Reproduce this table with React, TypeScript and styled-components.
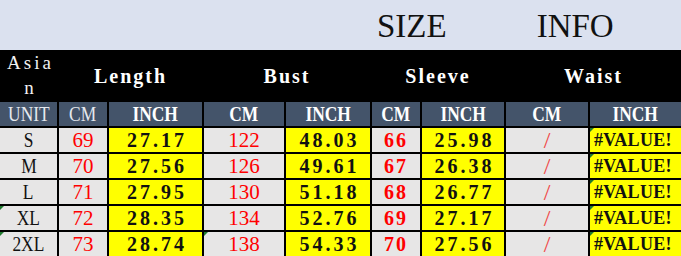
import { createGlobalStyle, styled } from "styled-components"

const GlobalStyle = createGlobalStyle`
	html, body {
		margin: 0;
		padding: 0;
		background: #dbe1ef;
	}
	body {
		width: 681px;
		height: 256px;
		overflow: hidden;
		font-family: "Liberation Serif", serif;
	}
`

const Page = styled.div`
	width: 681px;
	display: flex;
	flex-direction: column;
`

const Title = styled.div`
	height: 50px;
	padding-left: 377px;
	display: flex;
	align-items: center;
	gap: 90px;
	font-family: "Liberation Serif", serif;
	font-size: 33px;
	line-height: 50px;
	padding-top: 1px;
	box-sizing: border-box;
	color: #111;
`

const Table = styled.div`
	display: grid;
	grid-template-columns: 57px 48px 93px 80px 84px 48px 82px 82px 1fr;
	grid-template-rows: 50px 24px;
	grid-auto-rows: 24px;
	gap: 2px;
	background: #000;
`

const Head = styled.div<{ $span?: number }>`
	grid-column: span ${(p) => p.$span ?? 1};
	background: #000;
	color: #fff;
	display: flex;
	align-items: center;
	justify-content: center;
	font-family: "Liberation Serif", serif;
	font-size: 20px;
	font-weight: bold;
	letter-spacing: 2px;
	text-align: center;
	padding-top: 2px;
`

const AsianHead = styled(Head)`
	font-size: 19px;
	font-weight: normal;
	letter-spacing: 3px;
	line-height: 25px;
	padding: 0 2px 0 6px;
	word-break: break-all;
	color: #f2f2f2;
`

const Unit = styled.div<{ $bold?: boolean }>`
	background: #44546a;
	display: flex;
	align-items: center;
	justify-content: center;
	font-family: "Liberation Serif", serif;
	font-size: 20px;
	font-weight: ${(p) => (p.$bold ? "bold" : "normal")};
	color: ${(p) => (p.$bold ? "#fff" : "#e6e9ef")};
	overflow: hidden;
`

const Cell = styled.div<{ $yellow?: boolean; $flag?: boolean; $left?: boolean }>`
	position: relative;
	background: ${(p) => (p.$yellow ? "#ffff00" : "#e7e6e6")};
	display: flex;
	align-items: center;
	justify-content: ${(p) => (p.$left ? "flex-start" : "center")};
	padding-left: ${(p) => (p.$left ? "4px" : "0")};
	overflow: hidden;

	&::before {
		content: "";
		display: ${(p) => (p.$flag ? "block" : "none")};
		position: absolute;
		left: 0;
		top: 0;
		border-top: 4px solid #1f7a2f;
		border-right: 4px solid transparent;
	}
`

const Squeeze = styled.span<{ $sx?: number }>`
	display: inline-block;
	transform: scaleX(${(p) => p.$sx ?? 1});
	white-space: nowrap;
`

const Label = styled(Squeeze)`
	font-family: "Liberation Serif", serif;
	font-size: 20px;
	color: #111;
`

const RedNum = styled.span<{ $bold?: boolean }>`
	font-family: "Liberation Serif", serif;
	font-size: ${(p) => (p.$bold ? "20px" : "21px")};
	font-weight: ${(p) => (p.$bold ? "bold" : "normal")};
	letter-spacing: ${(p) => (p.$bold ? "2px" : "0")};
	color: #ff0000;
	white-space: nowrap;
`

const Inch = styled.span`
	font-family: "Liberation Serif", serif;
	font-size: 20px;
	font-weight: bold;
	letter-spacing: 3px;
	margin-right: -3px;
	color: #111;
	white-space: nowrap;
`

const Slash = styled.span`
	font-family: "Liberation Serif", serif;
	font-size: 24px;
	color: #f04848;
`

const ErrorText = styled.span`
	font-family: "Liberation Serif", serif;
	font-size: 18px;
	font-weight: bold;
	letter-spacing: 0.3px;
	color: #111;
	white-space: nowrap;
`

type Row = {
	size: string
	len: [number, string]
	bust: [number, string]
	sleeve: [number, string]
	flagSize?: boolean
	flagBust?: boolean
}

const rows: Row[] = [
	{ size: "S", len: [69, "27.17"], bust: [122, "48.03"], sleeve: [66, "25.98"] },
	{ size: "M", len: [70, "27.56"], bust: [126, "49.61"], sleeve: [67, "26.38"] },
	{ size: "L", len: [71, "27.95"], bust: [130, "51.18"], sleeve: [68, "26.77"] },
	{ size: "XL", len: [72, "28.35"], bust: [134, "52.76"], sleeve: [69, "27.17"], flagSize: true },
	{ size: "2XL", len: [73, "28.74"], bust: [138, "54.33"], sleeve: [70, "27.56"], flagSize: true, flagBust: true },
]

const units: [string, boolean][] = [
	["UNIT", false],
	["CM", false],
	["INCH", true],
	["CM", true],
	["INCH", true],
	["CM", true],
	["INCH", true],
	["CM", true],
	["INCH", true],
]

export default function App() {
	return (
		<Page>
			<GlobalStyle />
			<Title>
				<span>SIZE</span>
				<span>INFO</span>
			</Title>
			<Table>
				<AsianHead>Asian</AsianHead>
				<Head $span={2}>Length</Head>
				<Head $span={2}>Bust</Head>
				<Head $span={2}>Sleeve</Head>
				<Head $span={2}>Waist</Head>

				{units.map(([u, bold], i) => (
					<Unit key={i} $bold={bold}>
						<Squeeze $sx={0.87}>{u}</Squeeze>
					</Unit>
				))}

				{rows.map((r) => [
					<Cell key={r.size + "s"} $flag={r.flagSize}>
						<Label $sx={0.87}>{r.size}</Label>
					</Cell>,
					<Cell key={r.size + "lc"}>
						<RedNum>{r.len[0]}</RedNum>
					</Cell>,
					<Cell key={r.size + "li"} $yellow>
						<Inch>{r.len[1]}</Inch>
					</Cell>,
					<Cell key={r.size + "bc"} $flag={r.flagBust}>
						<RedNum>{r.bust[0]}</RedNum>
					</Cell>,
					<Cell key={r.size + "bi"} $yellow>
						<Inch>{r.bust[1]}</Inch>
					</Cell>,
					<Cell key={r.size + "sc"}>
						<RedNum $bold>{r.sleeve[0]}</RedNum>
					</Cell>,
					<Cell key={r.size + "si"} $yellow>
						<Inch>{r.sleeve[1]}</Inch>
					</Cell>,
					<Cell key={r.size + "wc"}>
						<Slash>/</Slash>
					</Cell>,
					<Cell key={r.size + "wi"} $yellow $flag $left>
						<ErrorText>#VALUE!</ErrorText>
					</Cell>,
				])}
			</Table>
		</Page>
	)
}
